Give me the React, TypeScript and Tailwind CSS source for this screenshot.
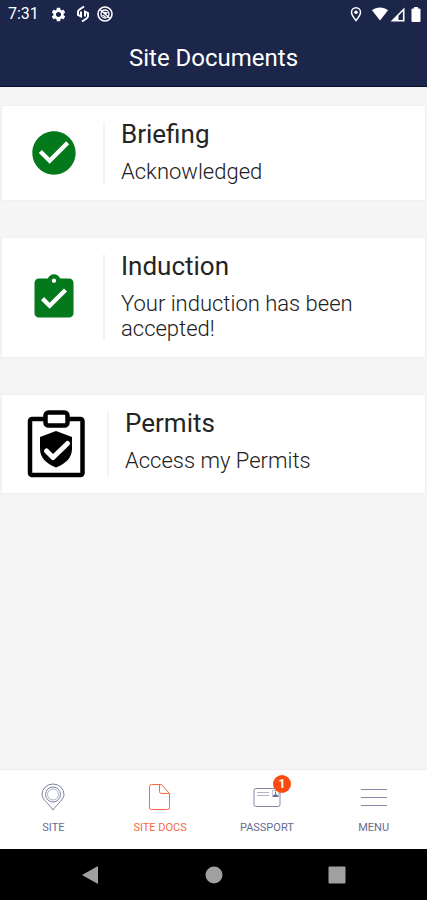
import type { ReactNode } from 'react'
import clsx from 'clsx'
import { MdAssignmentTurnedIn, MdCheckCircle, MdSettings } from 'react-icons/md'

type DocumentCardProps = {
  title: string
  text: string
  icon: ReactNode
  wide?: boolean
}

type TabProps = {
  label: string
  icon: ReactNode
  active?: boolean
  badge?: number
}

function StatusBar() {
  return (
    <div className="flex h-7 items-center justify-between pl-2 pr-1 text-white">
      <div className="flex items-center">
        <span className="w-10 text-base">7:31</span>
        <MdSettings className="ml-0.5 size-[17px]" />
        <svg viewBox="0 0 16 18" className="ml-2 h-[18px] w-4" fill="none" stroke="currentColor">
          <path d="M9 1.500 4.500 4.500Q3 5.500 3 7v3l3 1.500V6.500" strokeWidth="2" />
          <path d="M7 16.500 11.500 13.500Q13 12.500 13 11V8l-3-1.500v5" strokeWidth="2" />
        </svg>
        <svg viewBox="0 0 16 16" className="ml-1.5 size-4" fill="none" stroke="currentColor">
          <circle cx="8" cy="8" r="7" strokeWidth="1.6" />
          <circle cx="8" cy="8" r="4" strokeWidth="1.3" />
          <path d="m3 3.500 10 9M6.500 6.500l4 .5M5.500 9l3 2" strokeWidth="1.4" />
        </svg>
      </div>
      <div className="flex items-center">
        <svg viewBox="0 0 12 16" className="mr-2.5 h-4 w-3" fill="none" stroke="currentColor" strokeWidth="1.5">
          <path d="M6 14.5C3.5 11.5 1.5 9 1.5 6.2a4.5 4.5 0 0 1 9 0C10.500 9 8.500 11.500 6 14.500z" />
          <circle cx="6" cy="6.200" r="1.800" fill="currentColor" stroke="none" />
        </svg>
        <svg viewBox="0 0 16 14" className="h-3.5 w-4" fill="currentColor">
          <path d="M0 3.200C4.600-.4 11.400-.4 16 3.200L8 13.500z" />
        </svg>
        <svg viewBox="0 0 15 15" className="ml-0.5 size-[15px]" fill="currentColor">
          <path fillRule="evenodd" d="M14.500.5v14H.5zM12.900 4.300 8.500 8.700v4.200h4.400z" />
        </svg>
        <svg viewBox="0 0 10 15" className="ml-1.5 mr-0.5 h-[15px] w-2.5" fill="currentColor">
          <path d="M3 0h4v1.500h1.500q1 0 1 1V14q0 1-1 1h-7q-1 0-1-1V2.500q0-1 1-1H3z" />
        </svg>
      </div>
    </div>
  )
}

function PermitIcon() {
  return (
    <svg viewBox="0 0 58 68" className="h-[68px] w-[58px]" fill="none" stroke="black">
      <rect x="3" y="9" width="52.500" height="56" rx="2" strokeWidth="4.500" />
      <rect x="18.500" y="2.500" width="22" height="13" rx="3" fill="white" strokeWidth="4.500" />
      <path d="M29 21 45 27v12c0 8.500-6.500 15-16 18.500C19.500 54 13 47.500 13 39V27z" fill="black" stroke="none" />
      <path d="m19.500 41 6.500 6.500 14.500-14" stroke="white" strokeWidth="5" strokeLinecap="round" strokeLinejoin="round" />
    </svg>
  )
}

function DocumentCard({ title, text, icon, wide }: DocumentCardProps) {
  return (
    <article className="flex border border-[#f0f0f0] bg-white py-4">
      <div
        className={clsx(
          '-my-px flex shrink-0 items-center justify-center pl-0.5',
          wide ? 'w-[105px]' : 'w-[101px]'
        )}
      >
        {icon}
      </div>
      <div className="flex-1 border-l-2 border-[#f3f3f3] pl-4 pr-10 text-[#202020]">
        <h2 className="text-[26px] leading-6 text-[#242424]">{title}</h2>
        <p className="mt-[13px] text-[22px] font-light leading-[25px]">{text}</p>
      </div>
    </article>
  )
}

function Tab({ label, icon, active, badge }: TabProps) {
  return (
    <button
      type="button"
      aria-current={active ? 'page' : undefined}
      className={clsx(
        'flex flex-1 flex-col items-center gap-[9px] pt-[13px] text-[11px] leading-4',
        active ? 'text-[#f76843]' : 'text-[#666b91]'
      )}
    >
      <span className="relative">
        {icon}
        {badge && (
          <span className="absolute -right-2.5 -top-2 flex size-[18px] items-center justify-center rounded-full bg-[#fc4a10] text-xs font-bold text-white">
            {badge}
          </span>
        )}
      </span>
      {label}
    </button>
  )
}

function TabBar() {
  return (
    <nav className="flex h-20 border-t border-[#ececec] bg-white">
      <Tab
        label="SITE"
        icon={
          <svg viewBox="0 0 28 28" className="size-7" fill="none" stroke="currentColor" strokeOpacity=".85">
            <path d="M14 27C10 21 3 16.500 3 11.500a11 10.500 0 0 1 22 0c0 5-7 9.500-11 15.500z" />
            <circle cx="14" cy="11.500" r="7.500" />
            <circle cx="14" cy="11.500" r="5.500" strokeOpacity=".5" />
          </svg>
        }
      />
      <Tab
        label="SITE DOCS"
        active
        icon={
          <svg viewBox="0 0 28 28" className="size-7" fill="none" stroke="currentColor" strokeLinejoin="round">
            <path d="M5.500 1.500h10l8 9v14q0 2-2 2h-16q-2 0-2-2V3.500q0-2 2-2z" />
            <path d="M13.500 1.500v7q0 2 2 2h8" />
          </svg>
        }
      />
      <Tab
        label="PASSPORT"
        badge={1}
        icon={
          <svg viewBox="0 0 28 28" className="size-7" fill="none" stroke="currentColor">
            <rect x="1" y="5.500" width="26" height="18" rx="2" strokeOpacity=".8" />
            <path d="M4 9.500h12M4 12.500h12" strokeOpacity=".5" />
            <rect x="19.500" y="7.500" width="6" height="6" strokeOpacity=".4" />
            <path d="M20 13.500q2.500-4 5 0zM22.500 8.500v3" fill="currentColor" />
          </svg>
        }
      />
      <Tab
        label="MENU"
        icon={
          <svg viewBox="0 0 28 28" className="size-7" stroke="currentColor">
            <path d="M1 6.500h26M1 14.500h26M1 22.500h26" strokeOpacity=".8" />
          </svg>
        }
      />
    </nav>
  )
}

function SystemBar() {
  return (
    <div className="flex h-[51px] items-center justify-center gap-[103px] bg-black text-[#a0a0a0]">
      <button type="button" aria-label="Back">
        <svg viewBox="0 0 20 20" className="size-5" fill="currentColor">
          <path d="M1 10 17 1v18z" />
        </svg>
      </button>
      <button type="button" aria-label="Home">
        <svg viewBox="0 0 20 20" className="size-5" fill="currentColor">
          <circle cx="10" cy="10" r="8.500" />
        </svg>
      </button>
      <button type="button" aria-label="Recent apps">
        <svg viewBox="0 0 20 20" className="size-5" fill="currentColor">
          <rect x="1.500" y="1.500" width="17" height="17" rx="1" />
        </svg>
      </button>
    </div>
  )
}

export default function App() {
  return (
    <div className="flex min-h-screen flex-col bg-[#f5f5f5] font-[Roboto,sans-serif]">
      <header className="border-b border-[#0c1030] bg-[#1c264b] text-white">
        <StatusBar />
        <h1 className="pb-3.5 pt-4 text-center text-2xl leading-7">Site Documents</h1>
      </header>
      <main className="flex flex-1 flex-col gap-9 px-px pt-[18px]">
        <DocumentCard
          title="Briefing"
          text="Acknowledged"
          icon={<MdCheckCircle className="size-[52px] text-[#04791b]" />}
        />
        <DocumentCard
          title="Induction"
          text="Your induction has been accepted!"
          icon={<MdAssignmentTurnedIn className="size-[52px] text-[#04791b]" />}
        />
        <DocumentCard title="Permits" text="Access my Permits" wide icon={<PermitIcon />} />
      </main>
      <TabBar />
      <SystemBar />
    </div>
  )
}
